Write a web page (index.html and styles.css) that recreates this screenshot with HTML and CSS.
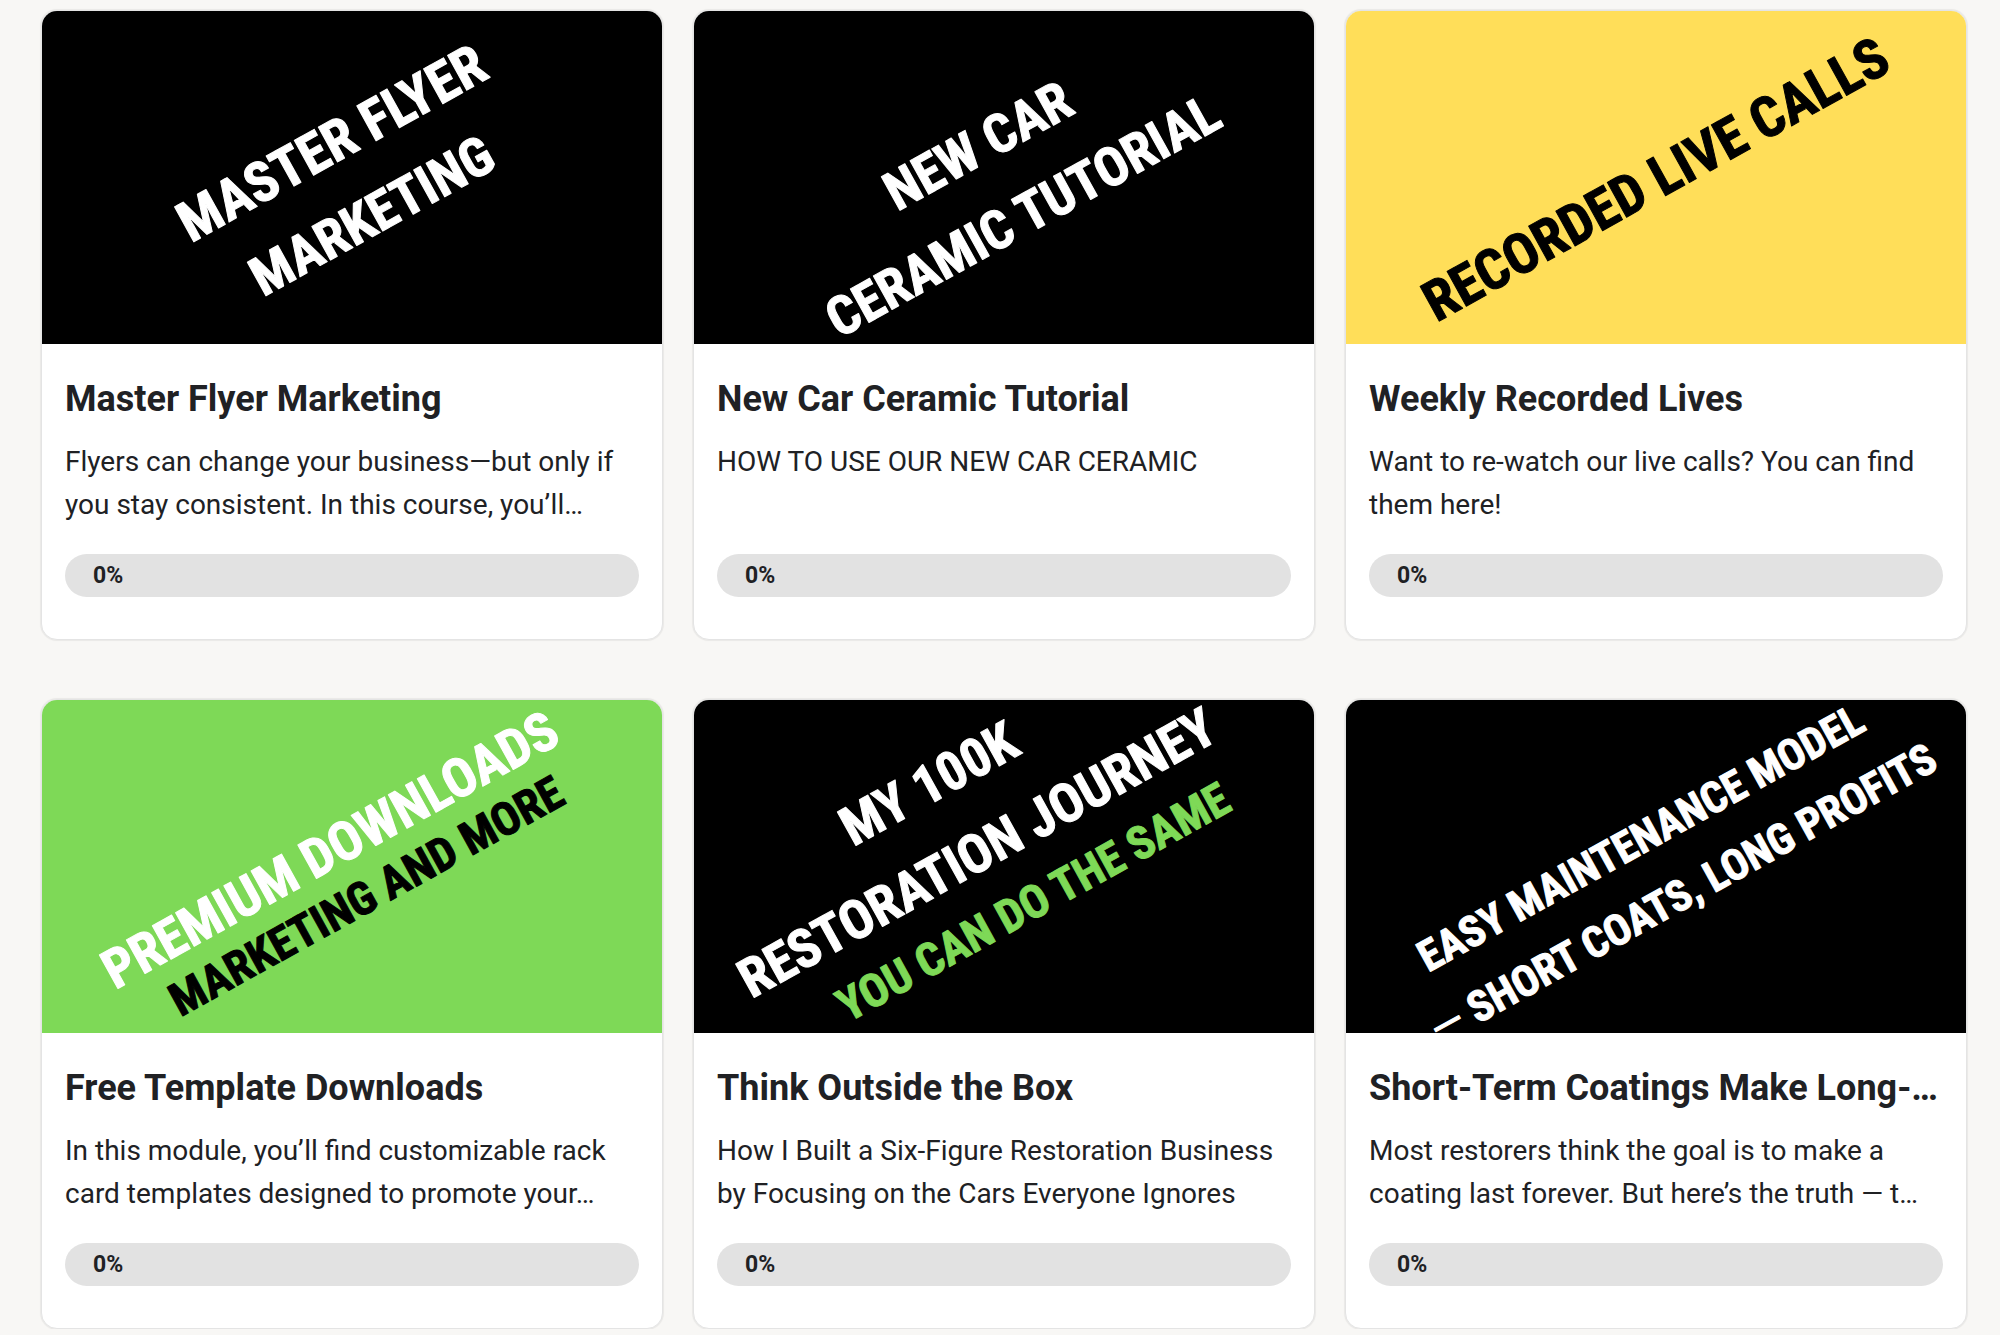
FILE: index.html
```html
<!DOCTYPE html>
<html lang="en">
<head>
    <meta charset="UTF-8">
    <meta name="viewport" content="width=device-width, initial-scale=1.0">
    <title>Classroom</title>
    <link rel="stylesheet" href="styles.css">
</head>
<body>
    <main class="courses">
        <a class="card" href="#">
            <svg class="cover cover-black" viewBox="0 0 620 333" role="img" aria-label="Master Flyer Marketing cover">
                <text class="xlarge" transform="translate(299 149) rotate(-29)">MASTER FLYER</text>
                <text class="large" transform="translate(339 221) rotate(-29)">MARKETING</text>
            </svg>
            <div class="card-body">
                <h2 class="title">Master Flyer Marketing</h2>
                <p class="description">Flyers can change your business—but only if you stay consistent. In this course, you’ll…</p>
                <div class="progress">0%</div>
            </div>
        </a>

        <a class="card" href="#">
            <svg class="cover cover-black" viewBox="0 0 620 333" role="img" aria-label="New Car Ceramic Tutorial cover">
                <text class="large" transform="translate(293 151) rotate(-29)">NEW CAR</text>
                <text class="large" transform="translate(338 221) rotate(-29)">CERAMIC TUTORIAL</text>
            </svg>
            <div class="card-body">
                <h2 class="title">New Car Ceramic Tutorial</h2>
                <p class="description">HOW TO USE OUR NEW CAR CERAMIC</p>
                <div class="progress">0%</div>
            </div>
        </a>

        <a class="card" href="#">
            <svg class="cover cover-yellow" viewBox="0 0 620 333" role="img" aria-label="Recorded Live Calls cover">
                <text class="xlarge black" transform="translate(319 185) rotate(-29)">RECORDED LIVE CALLS</text>
            </svg>
            <div class="card-body">
                <h2 class="title">Weekly Recorded Lives</h2>
                <p class="description">Want to re-watch our live calls? You can find them here!</p>
                <div class="progress">0%</div>
            </div>
        </a>

        <a class="card" href="#">
            <svg class="cover cover-green" viewBox="0 0 620 333" role="img" aria-label="Premium Downloads cover">
                <text class="large" transform="translate(297 166) rotate(-29)">PREMIUM DOWNLOADS</text>
                <text class="medium black" transform="translate(332 210) rotate(-29)">MARKETING AND MORE</text>
            </svg>
            <div class="card-body">
                <h2 class="title">Free Template Downloads</h2>
                <p class="description">In this module, you’ll find customizable rack card templates designed to promote your…</p>
                <div class="progress">0%</div>
            </div>
        </a>

        <a class="card" href="#">
            <svg class="cover cover-black" viewBox="0 0 620 333" role="img" aria-label="My 100K Restoration Journey cover">
                <text class="large" transform="translate(244 100) rotate(-29)">MY 100K</text>
                <text class="large" transform="translate(292 169) rotate(-29)">RESTORATION JOURNEY</text>
                <text class="medium green" transform="translate(347 216) rotate(-29)">YOU CAN DO THE SAME</text>
            </svg>
            <div class="card-body">
                <h2 class="title">Think Outside the Box</h2>
                <p class="description">How I Built a Six-Figure Restoration Business by Focusing on the Cars Everyone Ignores</p>
                <div class="progress">0%</div>
            </div>
        </a>

        <a class="card" href="#">
            <svg class="cover cover-black" viewBox="0 0 620 333" role="img" aria-label="Easy Maintenance Model cover">
                <text class="small" transform="translate(302 151) rotate(-29)">EASY MAINTENANCE MODEL</text>
                <text class="small end" transform="translate(594 68) rotate(-29)"><tspan class="dash">—</tspan> SHORT COATS, LONG PROFITS</text>
            </svg>
            <div class="card-body">
                <h2 class="title">Short-Term Coatings Make Long-…</h2>
                <p class="description">Most restorers think the goal is to make a coating last forever. But here’s the truth — t…</p>
                <div class="progress">0%</div>
            </div>
        </a>
    </main>
</body>
</html>
```
FILE: styles.css
```css
* {
    box-sizing: border-box;
}

body {
    margin: 0;
    background-color: #f8f7f5;
    color: #202124;
    font-family: Roboto, Arial, sans-serif;
}

.courses {
    display: grid;
    grid-template-columns: repeat(3, minmax(0, 1fr));
    gap: 59px 30px;
    padding: 10px 33px 0 41px;
}

.card {
    display: flex;
    flex-direction: column;
    overflow: hidden;
    background-color: #fff;
    border: 1px solid #e4e4e4;
    border-radius: 16px;
    box-shadow: 0 0 1px 1px rgba(0, 0, 0, 0.06);
    color: inherit;
    text-decoration: none;
}

/* Covers */
.cover {
    display: block;
    width: 100%;
    color: #fff;
    font-family: "Roboto Condensed", "Liberation Sans Narrow", "Arial Narrow", sans-serif;
    font-weight: bold;
    text-anchor: middle;
}

.cover text {
    fill: currentColor;
    stroke: currentColor;
    stroke-width: 1px;
    stroke-linejoin: round;
}

.cover-black { background-color: #000; }
.cover-yellow { background-color: #ffde59; }
.cover-green { background-color: #7ed957; }

.xlarge { font-size: 56px; }
.large { font-size: 54px; }
.medium { font-size: 46px; }
.small { font-size: 43px; }

.black { color: #000; }
.green { color: #7ed957; }
.cover .end { text-anchor: end; }

.dash {
    font-family: Roboto, sans-serif;
    font-weight: normal;
}

/* Card text */
.card-body {
    display: flex;
    flex-direction: column;
    flex-grow: 1;
    padding: 33px 23px 42px;
}

.title {
    margin: 0 0 19px;
    overflow: hidden;
    font-size: 36px;
    font-weight: bold;
    line-height: 44px;
    text-overflow: ellipsis;
    white-space: nowrap;
}

.description {
    margin: 0 0 28px;
    min-height: 86px;
    font-size: 28px;
    line-height: 43px;
}

.progress {
    margin-top: auto;
    padding: 0 28px;
    background-color: #e2e2e2;
    border-radius: 22px;
    font-size: 23px;
    font-weight: bold;
    line-height: 43px;
}
```
